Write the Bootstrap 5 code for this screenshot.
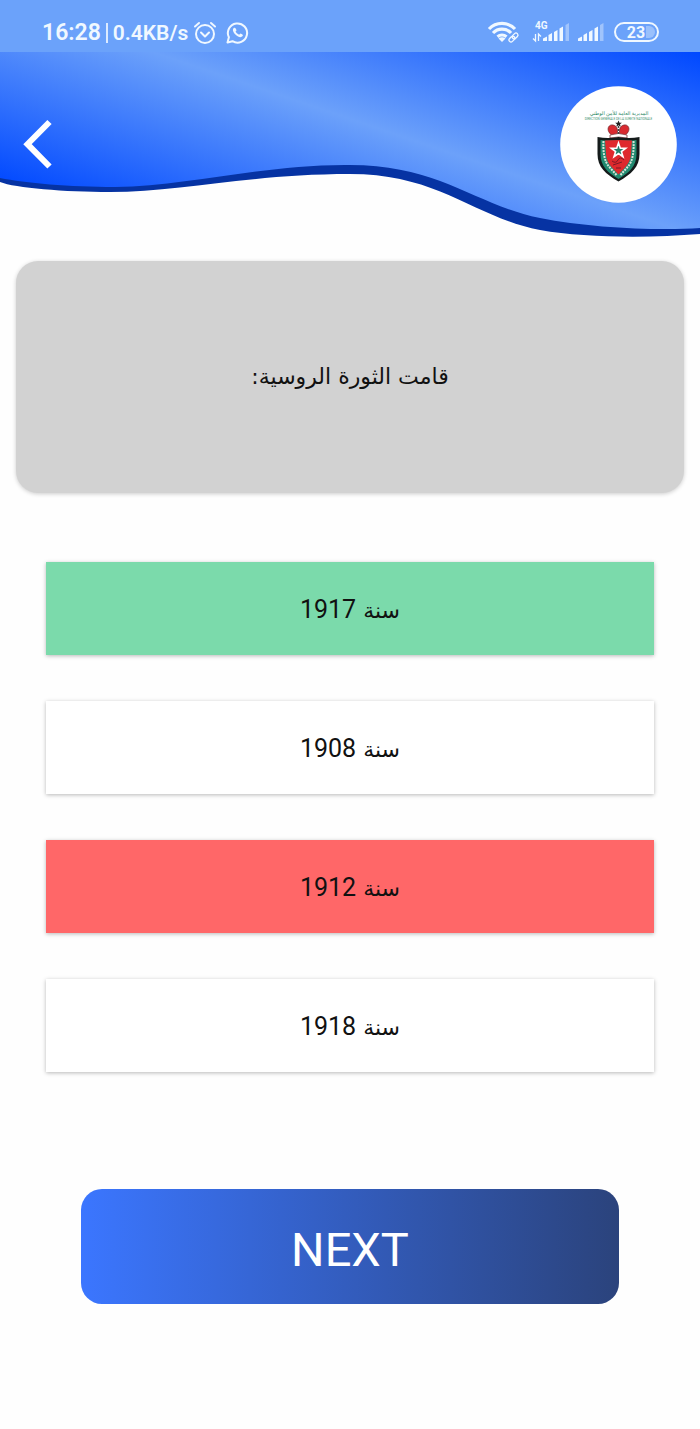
<!DOCTYPE html>
<html lang="ar">
<head>
<meta charset="utf-8">
<meta name="viewport" content="width=device-width, initial-scale=1">
<title>Quiz</title>
<link href="https://cdn.jsdelivr.net/npm/bootstrap@5.3.0/dist/css/bootstrap.min.css" rel="stylesheet">
<style>
  body { font-family: Roboto, "DejaVu Sans", sans-serif; background: #fefefe; color: #111; }
  .status-bar { height: 52px; padding: 12px 41px 0 42px; background: #6ba2fa; color: #f0f8ff; font-weight: 600; }
  .status-bar svg { display: block; flex: none; }
  .status-text { gap: 5px; line-height: 26px; font-size: 21px; }
  .clock { font-size: 23px; }
  .divider { width: 2px; height: 20px; background: #dcebff; }
  .hero { height: 186px; padding: 34px 23px 0 18px; }
  .back-btn { width: 44px; height: 116px; border: 0; }
  .question { margin: 23px 16px 0; height: 232px; border-radius: 22px; background: #d2d2d2; box-shadow: 0 1px 4px rgba(0,0,0,.2); font-family: "DejaVu Sans", sans-serif; font-size: 22px; line-height: 32px; }
  .answers { margin: 69px 46px 0; gap: 46px; }
  .answer { height: 93px; padding: 3px 12px 0; border-radius: 0; border: 0; background: #fff; color: #111; font-size: 25px; line-height: 32px; box-shadow: 0 1px 4px rgba(0,0,0,.28); }
  .answer span { font-family: "DejaVu Sans", sans-serif; font-size: 22px; }
  .answer:hover { background: #f8f8f8; }
  .answer.right, .answer.right:hover { background: #7bdaab; }
  .answer.wrong, .answer.wrong:hover { background: #ff6768; }
  .next-area { padding: 117px 81px 48px; }
  .next-btn, .next-btn:hover { height: 115px; padding: 6px 12px 0; border: 0; border-radius: 21px; color: #fff; font-size: 47px; line-height: 56px; background: linear-gradient(90deg, #3b76ff, #2b437c); }
</style>
</head>
<body>
<div class="status-bar d-flex justify-content-between align-items-start" dir="ltr">
  <div class="status-text d-flex align-items-center text-nowrap mt-2">
    <span class="clock">16:28</span><span class="divider"></span><span>0.4KB/s</span>
    <svg width="56" height="26" viewBox="0 0 56 26" fill="none" stroke="#f0f8ff" stroke-width="2" stroke-linecap="round" stroke-linejoin="round" aria-hidden="true">
      <circle cx="12" cy="14" r="9"/><path d="M8 12.500l4 4 4-4M2 6.500l4-3.500M22 6.500L18 3"/>
      <path d="M34.500 22.500l1.400-5.200A9.600 9.600 0 1 1 39.500 21.200z"/>
      <path d="M41 7.800c-2.200 1.700-.7 4.800 1.700 7s5.200 3.500 7 1.300c.8-1.200-.7-2-2.200-2.600l-1.400 1.300c-1.700-.8-2.900-2-3.500-3.200l1-1.300c-.6-1.500-1.300-3-2.600-2.500z" fill="#f0f8ff" stroke="none"/>
    </svg>
  </div>
  <svg width="172" height="32" viewBox="487 12 172 32" fill="#f0f8ff" role="img" aria-label="Wi-Fi, 4G, battery 23%">
    <g fill="none" stroke="#f0f8ff" stroke-width="3.200">
      <path d="M489 29a18 18 0 0 1 26 0"/>
      <path d="M493 33a12.500 12.500 0 0 1 18 0"/>
      <path d="M497.500 36.800a7 7 0 0 1 9 0"/>
    </g>
    <path d="M502 42l-3.500-3.500q3.500-2.500 7 0z"/>
    <g fill="none" stroke="#f0f8ff" stroke-width="1.300" transform="rotate(-45 513.500 37.500)">
      <rect x="508" y="35.500" width="6.500" height="4" rx="2"/><rect x="512.500" y="35.500" width="6.500" height="4" rx="2"/>
    </g>
    <text x="535" y="29" font-size="10" font-weight="700">4G</text>
    <path d="M535.500 34v7l-2.500-2.500M538.500 41v-7l2.500 2.500" fill="none" stroke="#f0f8ff" stroke-width="1.300"/>
    <path d="M543 38.500l4-2v4.500h-4zM548.500 35l3.500-2v8h-3.500zM554 32l3.500-2v11H554zM559.500 28.500l3.500-2V41h-3.500z"/>
    <path d="M565.500 25l3.500-2v18h-3.500z" opacity=".4"/>
    <path d="M578 38.500l4-2v4.500h-4zM583.500 35l3.500-2v8h-3.500zM589 32l3.500-2v11H589zM594.500 28.500l3.500-2V41h-3.500z"/>
    <path d="M600 25l3.500-2v18H600z" opacity=".4"/>
    <rect x="615" y="23" width="43" height="18" rx="9" fill="none" stroke="#f0f8ff" stroke-width="2"/>
    <path d="M646 26h3a6 6 0 0 1 0 12h-3z" opacity=".35"/>
    <text x="636" y="38" font-size="16" font-weight="700" text-anchor="middle">23</text>
  </svg>
</div>

<header class="hero position-relative d-flex justify-content-between align-items-start" dir="ltr">
  <svg class="position-absolute top-0 start-0 w-100 h-100" viewBox="0 52 700 186" preserveAspectRatio="none" aria-hidden="true">
    <defs>
      <linearGradient id="sky" gradientUnits="userSpaceOnUse" x1="290" y1="283" x2="402" y2="-48">
        <stop offset="0" stop-color="#0048ff"/><stop offset=".5" stop-color="#6ca1fa"/><stop offset="1" stop-color="#0048ff"/>
      </linearGradient>
    </defs>
    <path fill="#0633a3" d="M0 52H700V234C650 238 585 238 540 230C475 218 440 174 350 174C250 174 180 192 110 192C65 192 15 188 0 182Z"/>
    <path fill="url(#sky)" d="M0 52H700V228C660 231 590 228 540 218C475 205 440 165 350 165C265 164 190 186 115 187C70 187 25 183 0 178Z"/>
  </svg>
  <button class="back-btn btn p-0 position-relative d-flex align-items-center" type="button" aria-label="Back">
    <svg width="40" height="52" viewBox="18 118 40 52" fill="none" stroke="#fff" stroke-width="6" aria-hidden="true"><path d="M49.500 122L27.500 144.200L49.500 166.500"/></svg>
  </button>
  <svg class="position-relative" width="117" height="117" viewBox="560 86 117 117" role="img" aria-label="المديرية العامة للأمن الوطني">
    <circle cx="618.500" cy="144.500" r="58.300" fill="#fff"/>
    <text x="619" y="115" font-size="5" text-anchor="middle" fill="#27865f" direction="rtl">المديرية العامة للأمن الوطني</text>
    <text x="618.500" y="120" font-size="3" text-anchor="middle" fill="#3e9270">DIRECTION GENERALE DE LA SURETE NATIONALE</text>
    <g fill="#d92a30" stroke="#732126" stroke-width=".7">
      <path d="M613 136c-8-5-5-12 0-11 5 1 5 6 4 11zM624 136c8-5 5-12 0-11-5 1-5 6-4 11z"/>
      <path d="M610 135q8.500-3 17 0v3q-8.500-2-17 0z" fill="#fff"/>
    </g>
    <path d="M618.500 120.500l1 2.300h2.400l-1.900 1.500.7 2.400-2.200-1.400-2.200 1.400.7-2.400-1.900-1.500h2.400z" fill="#222"/>
    <path d="M618.500 126v8" stroke="#444" stroke-width="1.500" stroke-dasharray="2 1"/>
    <path d="M597.500 137q10.500 2 21 0 10.500 2 21 0v17c0 13-8 20-21 27.500-13-7.500-21-14.500-21-27.500z" fill="#151b1b"/>
    <path d="M600.500 140q9 1 18 0 9 1 18 0v14c0 12-7 18.500-18 25-11-6.500-18-13-18-25z" fill="#218a70"/>
    <path d="M603.500 141q-1 17 5 25l8 9M633.500 141q1 17-5 25l-8 9" fill="none" stroke="#d9e5d9" stroke-width="2" stroke-dasharray="2 1"/>
    <path d="M605 140.500q13.500-1 27 0l-1 13c0 9-6 14-12.500 21-6.500-7-12.500-12-12.500-21z" fill="#df292d"/>
    <path d="M618.500 143l1.800 5.200h5.400l-4.300 3.300 1.600 5.200-4.500-3.200-4.500 3.200 1.600-5.200-4.300-3.300h5.400z" fill="#23806b" stroke="#fff" stroke-width="1.600"/>
    <path d="M612 161q4 3 6-1t6 0M613 165l9-3M616 168h5" fill="none" stroke="#7b1b25" stroke-width="1"/>
  </svg>
</header>

<main>
  <div class="question d-flex align-items-center justify-content-center text-center" dir="rtl">قامت الثورة الروسية:</div>
  <div class="answers d-grid" dir="rtl">
    <button class="answer right btn" type="button"><span>سنة </span>1917</button>
    <button class="answer btn" type="button"><span>سنة </span>1908</button>
    <button class="answer wrong btn" type="button"><span>سنة </span>1912</button>
    <button class="answer btn" type="button"><span>سنة </span>1918</button>
  </div>
  <div class="next-area d-grid" dir="ltr">
    <button class="next-btn btn" type="button">NEXT</button>
  </div>
</main>
<script src="https://cdn.jsdelivr.net/npm/bootstrap@5.3.0/dist/js/bootstrap.bundle.min.js"></script>
</body>
</html>
